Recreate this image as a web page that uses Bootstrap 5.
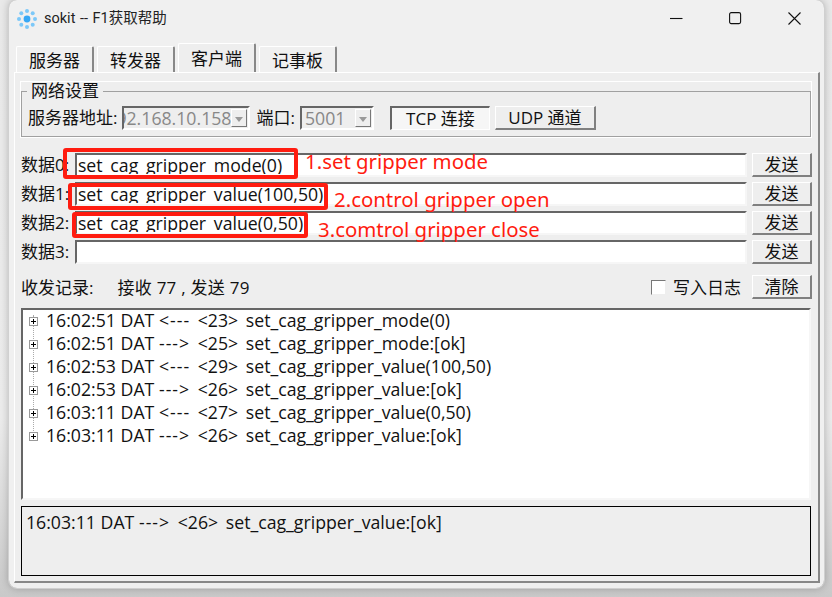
<!DOCTYPE html>
<html lang="zh">
<head>
<meta charset="utf-8">
<title>sokit</title>
<link href="https://cdn.jsdelivr.net/npm/bootstrap@5.3.0/dist/css/bootstrap.min.css" rel="stylesheet">
<style>
html,body{height:597px;overflow:hidden}
body{background:linear-gradient(#e9e9e9,#ececec 70%,#c9c9c9);font:17px/20px "Open Sans","Noto Sans CJK SC",sans-serif;color:#111}
.appwin{position:relative;margin-left:9px;width:815px;height:588px;background:#f0f0f0;border-radius:8px;box-shadow:0 0 8px rgba(0,0,0,.28);outline:1px solid #d0d0d0}
.titlebar{height:37px;padding-left:8px;font:14.5px/20px Roboto,"Noto Sans CJK SC",sans-serif;color:#222;word-spacing:1px}
.titletext{margin-left:7px}
.winctl{margin-left:auto;padding-right:23px;gap:46px}
.tabstrip{height:35px;padding:7px 0 0 7px}
.tabitem{width:78px;height:26px;margin-top:2px;margin-right:3px;background:#f0f0f0;border:1px solid #fff;border-bottom:0;border-right:2px solid #888;border-radius:2px 2px 0 0;line-height:27px}
.tabitem.tabon{height:29px;margin-top:-1px;margin-bottom:-1px;position:relative;z-index:2;background:#eee;line-height:30px}
.pane{width:806px;height:511px;margin-left:5px;background:#eee;border:1px solid #fff;border-right:2px solid #888;border-bottom:2px solid #888;padding:0 6px}
.netgroup{height:55px;padding:0 0 0 6px;border:1px solid #a0a0a0;outline:1px solid #fff;margin-top:9px;width:790px}
.netgroup legend{float:none;width:auto;font-size:17px;line-height:18px;margin:0 0 0 -1px;padding:0 4px}
.netrow{margin-top:6px;height:24px}
.combo{height:24px;background:#eee;border:2px solid;border-color:#666 #fff #fff #666;color:#888;overflow:hidden;position:relative;white-space:nowrap;line-height:21px;font-size:17.7px}
.combo1{width:128px;margin-left:5px;padding-right:17px}
.combo2{width:74px;margin-left:5px;padding-left:3px}
.portlabel{margin-left:6px}
.comboarrow{position:absolute;right:1px;top:1px;width:16px;height:18px;background:#eee;border:1px solid;border-color:#fff #777 #777 #fff}
.comboarrow::after{content:"";position:absolute;left:3px;top:7px;border:4px solid transparent;border-top:5px solid #999;border-bottom:0}
.oldbtn{height:24px;border:1px solid;border-width:1px 2px 2px 1px;border-color:#fff #808080 #808080 #fff;background:#eee;padding:0;border-radius:0;color:#111;line-height:19px;--bs-btn-font-size:17px}
.tcpbtn{width:100px;margin-left:16px;border-width:2px 1px 1px 2px;border-color:#666 #fff #fff #666;background:#f6f6f6;line-height:18px}
.udpbtn{width:101px;margin-left:5px}
.datarows{margin-top:16px;gap:5px}
.datarow{height:24px;width:791px}
.datarow label{width:54px;line-height:24px;white-space:nowrap}
.datafield{width:673px;height:24px;border:2px solid;border-color:#666 #f6f6f6 #f6f6f6 #666;background:#fff;padding:0 1px;color:#111;margin-right:5px;font-size:17.7px;line-height:20px}
.fieldclip{display:block;height:19px;overflow:hidden;white-space:nowrap}
.sendbtn{width:60px;margin-left:auto}
.statusline{margin-top:11px;height:24px;width:791px;line-height:24px}
.statustext{margin-top:2px}
.counts{margin-left:24px;letter-spacing:.25px}
.fakecheck{width:15px;height:15px;background:#fff;border:1px solid;border-color:#777 #eee #eee #777;margin-right:7px}
.loglabel{margin-right:11px}
.logtree{width:790px;height:192px;margin-top:9px;background:#fff;border:2px solid;border-color:#666 #f6f6f6 #f6f6f6 #666;padding:0 0 0 6px;position:relative;font-size:17.7px;word-spacing:3px}
.treeline{position:absolute;left:10px;top:5px;height:122px;border-left:1px dotted #aaa}
.treerow{height:23px;line-height:23px;white-space:nowrap;position:relative}
.treetext{margin-top:-2px}
.stamp{word-spacing:0}
.arrowmark{letter-spacing:1px;margin-left:-3px}
.plusbox{width:9px;height:9px;margin-right:8px;border:1px solid #999;background:#fff;position:relative;flex:none}
.plusbox::before{content:"";position:absolute;left:1px;top:3px;width:5px;height:1px;background:#000}
.plusbox::after{content:"";position:absolute;left:3px;top:1px;width:1px;height:5px;background:#000}
.lastmsg{width:790px;height:70px;margin-top:6px;border:1px solid #000;padding:4px;line-height:22px;background:#eee;font-size:17.7px;word-spacing:3px}
.redbox{position:absolute;border:4px solid #ff1c10;border-radius:3px;z-index:5}
.box0{left:54px;top:148px;width:235px;height:31px}
.box1{left:59px;top:183px;width:260px;height:27px}
.box2{left:63px;top:212px;width:236px;height:26px}
.redtext{position:absolute;color:#ff1c10;font:20.4px/26px "Noto Sans","Open Sans",sans-serif;white-space:nowrap;z-index:5}
.note0{left:296px;top:148px}
.note1{left:325px;top:186px}
.note2{left:309px;top:216px}
</style>
</head>
<body>
<div class="appwin">
  <div class="titlebar d-flex align-items-center">
    <svg width="20" height="20" viewBox="0 0 20 20" aria-hidden="true">
      <circle cx="10" cy="10" r="3.4" fill="#37a8f5"/>
      <g fill="#7cc8f8">
        <circle cx="10" cy="2" r="2"/><circle cx="15.7" cy="4.3" r="2"/><circle cx="18" cy="10" r="2"/><circle cx="15.7" cy="15.7" r="2"/><circle cx="10" cy="18" r="2"/><circle cx="4.3" cy="15.7" r="2"/><circle cx="2" cy="10" r="2"/><circle cx="4.3" cy="4.3" r="2"/>
      </g>
    </svg>
    <span class="titletext">sokit -- F1获取帮助</span>
    <div class="winctl d-flex align-items-center">
      <svg width="13" height="13" viewBox="0 0 13 13" aria-hidden="true"><path d="M0 6.5H12.5" stroke="#111" stroke-width="1.1"/></svg>
      <svg width="13" height="13" viewBox="0 0 13 13" aria-hidden="true"><rect x=".6" y=".6" width="11" height="11" rx="1.6" fill="none" stroke="#111" stroke-width="1.1"/></svg>
      <svg width="13" height="13" viewBox="0 0 13 13" aria-hidden="true"><path d="M.5.5 12.5 12.5M12.5.5.5 12.5" stroke="#111" stroke-width="1.1"/></svg>
    </div>
  </div>
  <div class="tabstrip d-flex">
    <div class="tabitem text-center">服务器</div>
    <div class="tabitem text-center">转发器</div>
    <div class="tabitem tabon text-center">客户端</div>
    <div class="tabitem text-center">记事板</div>
  </div>
  <div class="pane">
    <fieldset class="netgroup">
      <legend>网络设置</legend>
      <div class="netrow d-flex align-items-center">
        <span>服务器地址:</span>
        <div class="combo combo1 d-flex justify-content-end">192.168.10.158<span class="comboarrow"></span></div>
        <span class="portlabel">端口:</span>
        <div class="combo combo2">5001<span class="comboarrow"></span></div>
        <button type="button" class="btn oldbtn tcpbtn">TCP 连接</button>
        <button type="button" class="btn oldbtn udpbtn">UDP 通道</button>
      </div>
    </fieldset>
    <div class="datarows d-flex flex-column">
      <div class="datarow d-flex"><label>数据0:</label><div class="datafield"><span class="fieldclip">set_cag_gripper_mode(0)</span></div><button type="button" class="btn oldbtn sendbtn">发送</button></div>
      <div class="datarow d-flex"><label>数据1:</label><div class="datafield"><span class="fieldclip">set_cag_gripper_value(100,50)</span></div><button type="button" class="btn oldbtn sendbtn">发送</button></div>
      <div class="datarow d-flex"><label>数据2:</label><div class="datafield"><span class="fieldclip">set_cag_gripper_value(0,50)</span></div><button type="button" class="btn oldbtn sendbtn">发送</button></div>
      <div class="datarow d-flex"><label>数据3:</label><div class="datafield"></div><button type="button" class="btn oldbtn sendbtn">发送</button></div>
    </div>
    <div class="statusline d-flex align-items-center">
      <span class="statustext">收发记录:</span><span class="statustext counts">接收 77 , 发送 79</span>
      <span class="fakecheck ms-auto"></span><span class="statustext loglabel">写入日志</span>
      <button type="button" class="btn oldbtn sendbtn ms-0">清除</button>
    </div>
    <div class="logtree">
      <div class="treeline"></div>
      <div class="treerow d-flex align-items-center"><span class="plusbox"></span><span class="treetext"><span class="stamp">16:02:51 DAT</span> <span class="arrowmark">&lt;---</span> &lt;23&gt; set_cag_gripper_mode(0)</span></div>
      <div class="treerow d-flex align-items-center"><span class="plusbox"></span><span class="treetext"><span class="stamp">16:02:51 DAT</span> <span class="arrowmark">---&gt;</span> &lt;25&gt; set_cag_gripper_mode:[ok]</span></div>
      <div class="treerow d-flex align-items-center"><span class="plusbox"></span><span class="treetext"><span class="stamp">16:02:53 DAT</span> <span class="arrowmark">&lt;---</span> &lt;29&gt; set_cag_gripper_value(100,50)</span></div>
      <div class="treerow d-flex align-items-center"><span class="plusbox"></span><span class="treetext"><span class="stamp">16:02:53 DAT</span> <span class="arrowmark">---&gt;</span> &lt;26&gt; set_cag_gripper_value:[ok]</span></div>
      <div class="treerow d-flex align-items-center"><span class="plusbox"></span><span class="treetext"><span class="stamp">16:03:11 DAT</span> <span class="arrowmark">&lt;---</span> &lt;27&gt; set_cag_gripper_value(0,50)</span></div>
      <div class="treerow d-flex align-items-center"><span class="plusbox"></span><span class="treetext"><span class="stamp">16:03:11 DAT</span> <span class="arrowmark">---&gt;</span> &lt;26&gt; set_cag_gripper_value:[ok]</span></div>
    </div>
    <div class="lastmsg"><span class="stamp">16:03:11 DAT</span> <span class="arrowmark">---&gt;</span> &lt;26&gt; set_cag_gripper_value:[ok]</div>
  </div>
  <div class="redbox box0"></div>
  <div class="redbox box1"></div>
  <div class="redbox box2"></div>
  <div class="redtext note0">1.set gripper mode</div>
  <div class="redtext note1">2.control gripper open</div>
  <div class="redtext note2">3.comtrol gripper close</div>
</div>
<script src="https://cdn.jsdelivr.net/npm/bootstrap@5.3.0/dist/js/bootstrap.bundle.min.js"></script>
</body>
</html>
